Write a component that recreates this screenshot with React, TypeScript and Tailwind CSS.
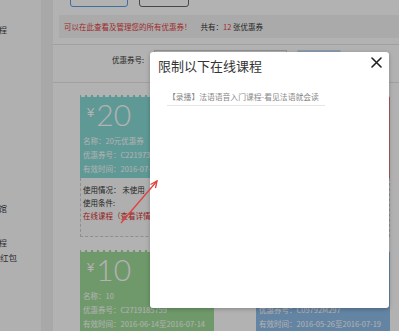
import React from "react";

type Coupon = {
  amount: string;
  name: string;
  code: string;
  period: string;
  bg: string;
  details?: boolean;
};

const coupons: Coupon[] = [
  {
    amount: "20",
    name: "名称：20元优惠券",
    code: "优惠券号：C2219735204",
    period: "有效时间：2016-07-01至2016-07-31",
    bg: "bg-[#87dbd6]",
    details: true,
  },
  {
    amount: "50",
    name: "名称：50元优惠券",
    code: "优惠券号：C1837264190",
    period: "有效时间：2016-06-20至2016-07-20",
    bg: "bg-[#f08282]",
    details: true,
  },
  {
    amount: "10",
    name: "名称：10",
    code: "优惠券号：C2719185759",
    period: "有效时间：2016-06-14至2016-07-14",
    bg: "bg-[#9fdc99]",
  },
  {
    amount: "10",
    name: "名称：10",
    code: "优惠券号：C09792M297",
    period: "有效时间：2016-05-26至2016-07-19",
    bg: "bg-[#8fbdea]",
  },
];

function CouponCard({ c }: { c: Coupon }) {
  return (
    <div className="flex flex-col">
      <div className={`${c.bg} h-[83px] flex flex-col text-white`}>
        <div className="h-[4px] bg-[radial-gradient(circle_at_3px_0px,#ffffff_2px,transparent_2.5px)] bg-[length:6px_4px]" />
        <div className="flex items-start pl-[7px] h-[30px]">
          <span className="mt-[7px] text-[13px] leading-[13px] font-['Liberation_Sans',sans-serif]">
            ¥
          </span>
          <span className="ml-[2px] text-[30px] leading-[30px] font-light font-['Lato','Noto_Sans',sans-serif]">
            {c.amount}
          </span>
        </div>
        <div className="mt-[5px] pl-[3px] text-[7.5px] leading-[14px] whitespace-nowrap overflow-hidden">
          <div>{c.name}</div>
          <div>{c.code}</div>
          <div>{c.period}</div>
        </div>
      </div>
      {c.details ? (
        <div className="h-[59px] bg-[#fbfbfb] border border-t-0 border-dashed border-[#cdcdcd] pt-[5px] pl-[2px] text-[7.5px] leading-[13px] text-[#333] whitespace-nowrap overflow-hidden">
          <div>使用情况： 未使用</div>
          <div>使用条件:</div>
          <div className="text-[#d62b2b]">在线课程（查看详情）</div>
        </div>
      ) : null}
    </div>
  );
}

function SideItem({ text, w, mt }: { text: string; w: string; mt: string }) {
  return (
    <div className={`${mt} -ml-[40px] ${w} text-right whitespace-nowrap`}>{text}</div>
  );
}

export default function App() {
  return (
    <div className="relative w-[399px] h-[331px] overflow-hidden flex bg-white text-[#333] font-['Noto_Sans_CJK_SC','Liberation_Sans',sans-serif]">
      {/* sidebar */}
      <aside className="w-[41px] shrink-0 bg-[#fdfdfd] overflow-hidden pt-[22px] text-[8.5px] leading-[15px] text-[#444]">
        <SideItem text="在线课程" w="w-[47px]" mt="mt-0" />
        <SideItem text="我的图书馆" w="w-[47px]" mt="mt-[164px]" />
        <SideItem text="直播课程" w="w-[47px]" mt="mt-[19px]" />
        <SideItem text="我的现金红包" w="w-[57px]" mt="mt-0" />
      </aside>
      <div className="w-[12px] shrink-0 bg-[#f1f1f1]" />

      {/* main */}
      <main className="flex-1 min-w-0 flex flex-col">
        <div className="flex gap-[11px] pl-[17px] mt-[-17px] h-[24px] shrink-0 text-[10px] leading-[12px]">
          <div className="w-[58px] h-full rounded-[3px] border border-[#5b9ee8] text-[#3d86d6] flex justify-center pt-[3px]">
            我的优惠券
          </div>
          <div className="w-[50px] h-full rounded-[3px] border border-[#666] text-[#444] flex justify-center pt-[3px]">
            已过期
          </div>
        </div>

        <div className="mt-[8px] ml-[6px] h-[23px] shrink-0 bg-[#f4f4f4] flex items-center pl-[5px] text-[7.5px] whitespace-nowrap">
          <span className="text-[#e4393c]">可以在此查看及管理您的所有优惠券！</span>
          <span className="ml-[9px]">
            共有：<span className="text-[#e4393c]">12</span> 张优惠券
          </span>
        </div>

        <div className="mt-[6px] h-[39px] shrink-0 border-y border-[#e6e6e6] bg-white flex items-start pt-[5px] pl-[59px] text-[7.5px]">
          <div className="h-[20px] flex items-center whitespace-nowrap">优惠券号:</div>
          <div className="ml-[10px] w-[133px] h-[20px] bg-white border border-[#d0d0d0]" />
          <div className="ml-[10px] w-[44px] h-[20px] rounded-[2px] bg-[#c6def6]" />
        </div>

        <div className="mt-[12px] pl-[27px] grid grid-cols-[134px_134px] gap-x-[42px] gap-y-[13px]">
          {coupons.map((c, i) => (
            <CouponCard key={i} c={c} />
          ))}
        </div>
      </main>

      {/* overlay */}
      <div className="absolute inset-0 bg-[rgba(0,0,0,0.3)]" />

      {/* modal */}
      <div className="absolute left-[150px] top-[52px] w-[239px] h-[256px] bg-white rounded-[3px] shadow-[0_1px_4px_rgba(0,0,0,0.25)] flex flex-col">
        <div className="flex items-start justify-between pl-[8px] pr-[7px] pt-[5px]">
          <div className="mt-[1px] text-[13px] leading-[16px] text-[#333]">限制以下在线课程</div>
          <svg width="11" height="11" viewBox="0 0 11 11" className="shrink-0">
            <path d="M1 1 L10 10 M10 1 L1 10" stroke="#222" strokeWidth="1.6" strokeLinecap="round" />
          </svg>
        </div>
        <div className="mt-[16px] ml-[17px] w-[158px] border-b border-[#e6e6e6] pl-[1px] pb-[2px] text-[7.8px] leading-[13px] text-[#888] whitespace-nowrap">
          【录播】法语语音入门课程-看见法语就会读
        </div>
      </div>

      {/* annotation arrow */}
      <svg className="absolute inset-0 pointer-events-none" width="399" height="331" viewBox="0 0 399 331">
        <path d="M121 223 L157 181" stroke="#e2403c" strokeWidth="1.3" fill="none" />
        <path d="M150.5 184.5 L157 181 L155.5 188" stroke="#e2403c" strokeWidth="1.3" fill="none" strokeLinejoin="miter" />
      </svg>
    </div>
  );
}
